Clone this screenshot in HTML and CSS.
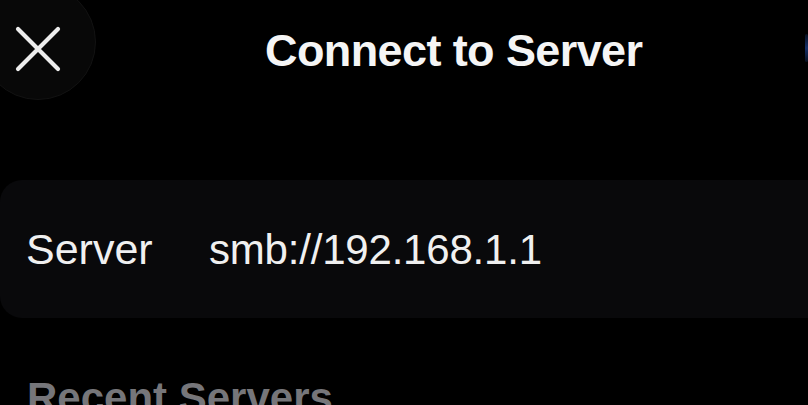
FILE: index.html
```html
<!DOCTYPE html>
<html lang="en">
<head>
<meta charset="utf-8">
<title>Connect to Server</title>
<link rel="stylesheet" href="styles.css">
</head>
<body>
<div class="screen">
  <header class="header">
    <button class="close" aria-label="Close">
      <svg width="46" height="46" viewBox="0 0 46 46" aria-hidden="true">
        <path d="M3 3 L43 43 M43 3 L3 43" stroke="#ededed" stroke-width="4.2" stroke-linecap="round" fill="none"/>
      </svg>
    </button>
    <h1 class="title">Connect to Server</h1>
    <span class="edge-glow"></span>
  </header>
  <section class="card">
    <div class="row">
      <span class="label">Server</span>
      <span class="value">smb://192.168.1.1</span>
    </div>
  </section>
  <h2 class="section-title">Recent Servers</h2>
</div>
</body>
</html>
```
FILE: styles.css
```css
html, body {
  margin: 0;
  padding: 0;
  background: #000;
  overflow: hidden;
}
body {
  width: 808px;
  height: 405px;
  font-family: "Liberation Sans", Arial, sans-serif;
  color: #f2f2f2;
}
.screen {
  width: 808px;
  height: 405px;
  overflow: hidden;
  display: flex;
  flex-direction: column;
}
.header {
  position: relative;
  display: flex;
  align-items: center;
  height: 102px;
  flex-shrink: 0;
}
.close {
  align-self: flex-start;
  flex-shrink: 0;
  width: 116px;
  height: 116px;
  margin-left: -20px;
  margin-top: -16px;
  padding: 13px 0 0 0;
  border-radius: 50%;
  background: #080808;
  border: 1px solid #121212;
  display: flex;
  align-items: center;
  justify-content: center;
  box-sizing: border-box;
}
.close svg { display: block; }
.title {
  margin: 0 0 0 169px;
  font-size: 45px;
  line-height: 54px;
  font-weight: 700;
  letter-spacing: -0.6px;
  color: #f5f5f5;
  white-space: nowrap;
}
.edge-glow {
  position: absolute;
  right: 0;
  top: 34px;
  width: 3px;
  height: 28px;
  background: linear-gradient(to bottom, #07101f, #16306a, #07101f);
  border-radius: 2px;
}
.card {
  margin: 78px -30px 0 0;
  height: 138px;
  background: #09090b;
  border-radius: 22px;
  display: flex;
  align-items: center;
  flex-shrink: 0;
}
.row {
  display: grid;
  grid-template-columns: 183px auto;
  padding-left: 26px;
  align-items: baseline;
}
.label {
  font-size: 43px;
  line-height: 50px;
  color: #f0f0f0;
}
.value {
  font-size: 42px;
  line-height: 50px;
  color: #f0f0f0;
  letter-spacing: -0.2px;
}
.section-title {
  margin: 55px 0 0 27px;
  font-size: 42px;
  line-height: 50px;
  font-weight: 700;
  color: #76767a;
  white-space: nowrap;
}
```
